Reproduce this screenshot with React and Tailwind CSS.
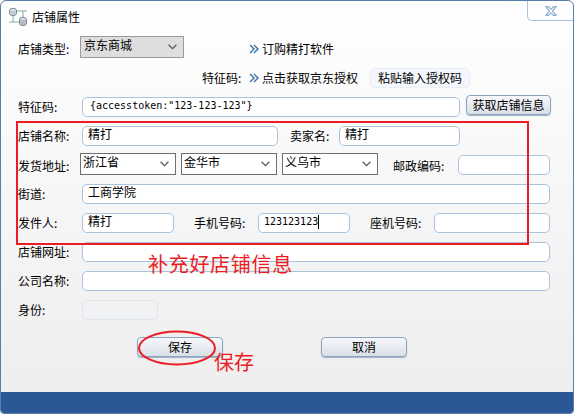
import React from 'react';

const cjk = { fontFamily: '"Noto Sans CJK SC", sans-serif' };

function Label({ children, className = 'w-[62px]' }) {
  return <span className={`shrink-0 text-xs leading-5 ${className}`}>{children}</span>;
}

function TextBox({ value, className = '', disabled, caret, mono }) {
  return (
    <div
      className={`h-5 flex items-center rounded-[5px] border px-[5px] text-xs ${
        disabled ? 'bg-[#f1f2f4] border-[#e2e6ec]' : 'bg-white border-[#a9c3dd]'
      } ${mono ? 'font-["DejaVu_Sans_Mono"] text-[10px] pb-[2px]' : 'pb-1'} ${className}`}
    >
      <span className="whitespace-pre">{value}</span>
      {caret && <span className="w-px h-[14px] bg-black" />}
    </div>
  );
}

function Select({ value, className = '', gray }) {
  return (
    <div
      className={`h-[22px] flex items-center justify-between border pl-[2px] pr-[6px] pb-1 text-xs ${
        gray ? 'bg-[#dedede] border-[#9a9a9a] pl-[3px]' : 'bg-white border-[#707070]'
      } ${className}`}
    >
      <span>{value}</span>
      <svg width="9" height="6" viewBox="0 0 9 6" className="mt-1 text-[#555]" fill="none" stroke="currentColor" strokeWidth="1.2">
        <path d="M.6.8 4.5 4.6 8.4.8" />
      </svg>
    </div>
  );
}

function Arrows() {
  return (
    <svg width="10" height="10" viewBox="0 0 10 10" fill="none" stroke="#3c6fa8" strokeWidth="1.4" className="shrink-0">
      <path d="M1 1l4 4-4 4M5 1l4 4-4 4" />
    </svg>
  );
}

function Button({ children, className = '' }) {
  return (
    <div
      className={`h-5 flex items-center justify-center rounded-[4px] border border-[#8ba3bf] bg-gradient-to-b from-[#f7f8fb] to-[#dadfe6] shadow-[0_1px_1px_#9fb0c4] text-xs ${className}`}
    >
      {children}
    </div>
  );
}

function WindowIcon() {
  return (
    <svg width="20" height="20" viewBox="0 0 20 20" fill="none" className="shrink-0">
      <path d="M5 4h14M15 4v7M1 15h10M5 7v8" stroke="#7fae9c" strokeWidth="1" />
      <ellipse cx="5" cy="3.5" rx="3.5" ry="2.2" fill="#e4e8ec" stroke="#7b8794" />
      <path d="M1.500 3.500v3c0 2.800 7 2.800 7 0v-3" fill="#c3cad2" stroke="#7b8794" />
      <ellipse cx="15" cy="12.500" rx="3.500" ry="2.200" fill="#e4e8ec" stroke="#7b8794" />
      <path d="M11.500 12.500v4c0 2.800 7 2.800 7 0v-4" fill="#b4bdc7" stroke="#7b8794" />
    </svg>
  );
}

export default function App() {
  return (
    <div style={cjk} className="relative w-[574px] h-[414px] flex flex-col overflow-hidden rounded-t-[6px] rounded-b-[4px] border border-[#5a7dab] bg-gradient-to-b from-white to-[#ededed] text-black">
      <div className="relative h-[35px] shrink-0 flex items-start pl-[7px] pt-[6px] gap-[4px]">
        <WindowIcon />
        <span className="text-xs leading-5">店铺属性</span>
        <div className="absolute right-0 top-0 w-[46px] h-[20px] rounded-bl-[5px] border-l border-b border-[#a9c3dd] flex items-center justify-center">
          <svg width="12" height="10" viewBox="0 0 12 10" fill="#fff" stroke="#8fb0d2" strokeWidth="1.2">
            <path d="M1 .7h2.500L6 3.200 8.500.7H11L7.500 5 11 9.300H8.500L6 6.800 3.500 9.300H1L4.500 5z" />
          </svg>
        </div>
      </div>

      <div className="flex-1 flex flex-col pl-[17px]">
        <div className="flex">
          <Label className="w-[62px] pt-[3px]">店铺类型:</Label>
          <Select value="京东商城" gray className="w-[104px]" />
          <div className="ml-[65px] flex items-center gap-[3px] text-xs h-5 mt-[3px]">
            <Arrows />
            <span>订购精打软件</span>
          </div>
        </div>

        <div className="flex items-center mt-[9px] h-5 pl-[184px] text-xs">
          <span className="w-[47px]">特征码:</span>
          <Arrows />
          <span className="ml-[3px] w-[95px] whitespace-nowrap">点击获取京东授权</span>
          <div className="ml-[13px] w-[100px] h-5 flex items-center justify-center rounded-[5px] border border-[#e9eef4] bg-[#f4f7fb]">粘贴输入授权码</div>
        </div>

        <div className="flex mt-[9px] h-5">
          <Label className="w-[64px]">特征码:</Label>
          <TextBox mono value={'{accesstoken:"123-123-123"}'} className="w-[378px] pl-[7px]" />
          <Button className="ml-[6px] w-[85px] -mt-[2px]">获取店铺信息</Button>
        </div>

        <div className="flex mt-[9px] h-5">
          <Label className="w-[64px]">店铺名称:</Label>
          <TextBox value="精打" className="w-[196px]" />
          <Label className="w-[49px] ml-[12px]">卖家名:</Label>
          <TextBox value="精打" className="w-[121px]" />
        </div>

        <div className="flex mt-[7px] h-[22px] items-start">
          <Label className="w-[62px] pt-[3px]">发货地址:</Label>
          <Select value="浙江省" className="w-[96px]" />
          <Select value="金华市" className="w-[96px] ml-[5px]" />
          <Select value="义乌市" className="w-[96px] ml-[5px]" />
          <Label className="w-[65px] ml-[15px] pt-[3px]">邮政编码:</Label>
          <TextBox className="w-[92px] mt-[2px]" />
        </div>

        <div className="flex mt-[9px] h-5">
          <Label className="w-[64px]">街道:</Label>
          <TextBox value="工商学院" className="w-[468px]" />
        </div>

        <div className="flex mt-[9px] h-5">
          <Label className="w-[64px]">发件人:</Label>
          <TextBox value="精打" className="w-[92px]" />
          <Label className="w-[64px] ml-[20px]">手机号码:</Label>
          <TextBox mono caret value="123123123" className="w-[92px]" />
          <Label className="w-[64px] ml-[20px]">座机号码:</Label>
          <TextBox className="w-[116px]" />
        </div>

        <div className="flex mt-[9px] h-5">
          <Label className="w-[64px]">店铺网址:</Label>
          <TextBox className="w-[468px]" />
        </div>

        <div className="flex mt-[9px] h-5">
          <Label className="w-[64px]">公司名称:</Label>
          <TextBox className="w-[468px]" />
        </div>

        <div className="flex mt-[9px] h-5">
          <Label className="w-[64px]">身份:</Label>
          <TextBox disabled className="w-[76px]" />
        </div>

        <div className="flex mt-[17px] pl-[119px] gap-[98px]">
          <Button className="w-[86px]">保存</Button>
          <Button className="w-[86px]">取消</Button>
        </div>
      </div>

      <div className="h-[21px] shrink-0 bg-[#2b5797]" />

      {/* 截图上的红色标注 */}
      <div className="absolute left-[15px] top-[120px] w-[513px] h-[124px] border-[2px] border-[#ed1c24]" />
      <span className="absolute left-[147px] top-[249px] text-[20px] leading-7 text-[#ed1c24] whitespace-nowrap tracking-[0.7px]">补充好店铺信息</span>
      <span className="absolute left-[213px] top-[347px] text-[20px] leading-7 text-[#ed1c24] whitespace-nowrap">保存</span>
      <svg className="absolute left-[136px] top-[329px]" width="80" height="36" viewBox="0 0 80 36" fill="none" stroke="#ed1c24" strokeWidth="2">
        <ellipse cx="40" cy="18" rx="38" ry="16.500" />
      </svg>
    </div>
  );
}
